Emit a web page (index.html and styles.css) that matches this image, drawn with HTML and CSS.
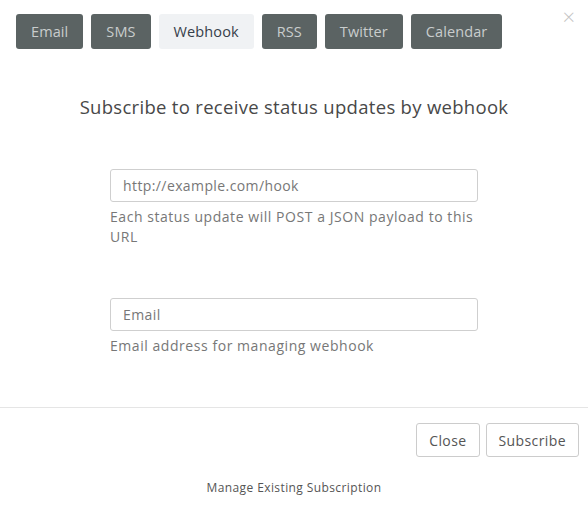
FILE: index.html
```html
<!DOCTYPE html>
<html>
<head>
<meta charset="utf-8">
<link rel="stylesheet" href="styles.css">
</head>
<body>
<div class="modal">
  <div class="header">
    <div class="tabs">
      <button class="tab">Email</button>
      <button class="tab">SMS</button>
      <button class="tab active">Webhook</button>
      <button class="tab">RSS</button>
      <button class="tab">Twitter</button>
      <button class="tab">Calendar</button>
    </div>
    <span class="close-x">&times;</span>
  </div>
  <h2 class="title">Subscribe to receive status updates by webhook</h2>
  <div class="form">
    <div class="field">
      <div class="input">http://example.com/hook</div>
      <p class="help">Each status update will POST a JSON payload to this URL</p>
    </div>
    <div class="field second">
      <div class="input">Email</div>
      <p class="help">Email address for managing webhook</p>
    </div>
  </div>
  <div class="footer">
    <button class="btn">Close</button>
    <button class="btn">Subscribe</button>
  </div>
  <div class="manage">Manage Existing Subscription</div>
</div>
</body>
</html>
```
FILE: styles.css
```css
* { box-sizing: border-box; }
html, body { margin: 0; padding: 0; background: #fff; }
body { font-family: "Open Sans", "Liberation Sans", sans-serif; color: #333; width: 588px; height: 514px; overflow: hidden; }
.modal { display: flex; flex-direction: column; }
.header { display: flex; justify-content: space-between; padding: 14px 16px 0 16px; }
.tabs { display: flex; gap: 8px; }
.tab { height: 35px; border: none; border-radius: 3px; background: #5b6363; color: #c9cdcd; font-family: inherit; font-size: 14.5px; letter-spacing: 0.1px; padding: 0 15px; }
.tab.active { background: #f0f2f4; color: #36404a; }
.close-x { color: #c4c4c4; font-size: 22px; line-height: 1; margin-top: -9px; margin-right: -3px; font-weight: 300; }
.title { margin: 46px 0 0; text-align: center; font-weight: 400; font-size: 18.5px; letter-spacing: 0.3px; color: #484848; line-height: 24px; }
.form { display: flex; flex-direction: column; align-items: center; padding-top: 50px; }
.field { width: 368px; }
.field.second { margin-top: 51px; }
.input { height: 33px; border: 1px solid #cfcfcf; border-radius: 3px; padding: 0 12px; font-size: 14px; letter-spacing: 0.4px; color: #777; line-height: 31px; }
.help { margin: 5px 0 0; font-size: 14px; letter-spacing: 0.55px; line-height: 20px; color: #777; }
.footer { margin-top: 51px; border-top: 1px solid #e5e5e5; display: flex; justify-content: flex-end; gap: 6px; padding: 15px 9px 0 0; }
.btn { height: 34px; border: 1px solid #ccc; border-radius: 3px; background: #fff; color: #555; font-family: inherit; font-size: 14px; letter-spacing: 0.4px; padding: 0 12px; }
.manage { text-align: center; font-size: 12px; letter-spacing: 0.4px; color: #555; margin-top: 22px; }
```
